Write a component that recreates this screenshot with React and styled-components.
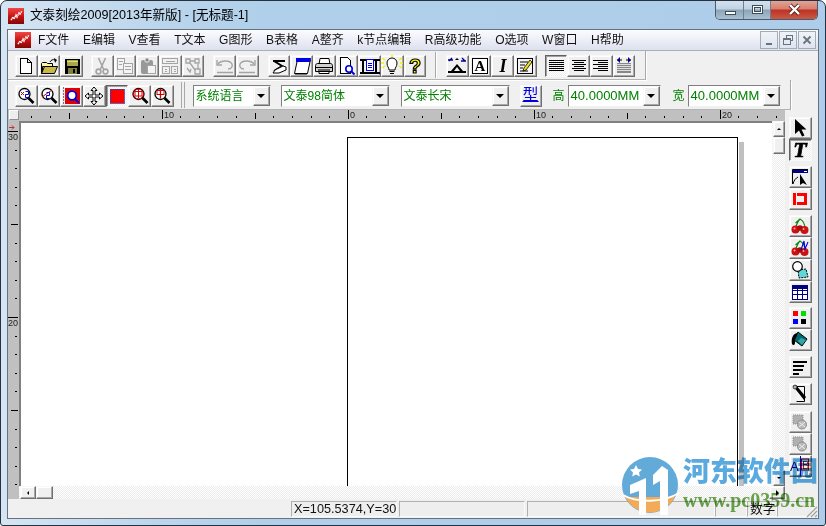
import React from 'react';
import styled, { createGlobalStyle, css } from 'styled-components';

const Global = createGlobalStyle`
  html, body { margin: 0; padding: 0; background: #fff; }
  * { box-sizing: border-box; }
`;
const UI = `"Liberation Sans", "Noto Sans CJK SC", sans-serif`;
const dither = `conic-gradient(#ffffff 25%, #ececec 0 50%, #ffffff 0 75%, #ececec 0) 0 0 / 2px 2px`;
const raised = css`
  background: #f0f0f0;
  border: 1px solid;
  border-color: #f8f8f8 #707070 #707070 #f8f8f8;
  box-shadow: inset -1px -1px 0 #a8a8a8, inset 1px 1px 0 #fff;
`;

const Frame = styled.div`
  position: relative; width: 826px; height: 526px; overflow: hidden;
  display: flex; flex-direction: column; font-family: ${UI};
  background: linear-gradient(90deg, #d6e5f3 0, #bcd6ec 150px, #afcfea 270px, #aecdea 100%);
  border: 1px solid #27323e; border-radius: 7px 7px 3px 3px;
  padding: 0 6px 6px;
`;
const TitleBar = styled.div`
  height: 28px; flex: none; display: flex; align-items: flex-start; gap: 6px;
  margin: 0 -6px; padding: 7px 0 0 7px; position: relative;
`;
const TitleText = styled.div`font-size: 12.6px; line-height: 14px; color: #000; white-space: nowrap;`;
const Caption = styled.div`
  position: absolute; top: -1px; right: 7px; height: 20px; display: flex;
  border: 1px solid #4a5a6a; border-top: 0; border-radius: 0 0 5px 5px; overflow: hidden;
`;
const CapBtn = styled.div`
  width: ${p => p.$w}px; display: flex; align-items: center; justify-content: center;
  border-left: 1px solid ${p => p.$first ? 'transparent' : '#6d7f90'};
  background: ${p => p.$close
    ? 'linear-gradient(180deg, #e2a99c 0%, #d88070 45%, #bf3325 55%, #c85a46 100%)'
    : 'linear-gradient(180deg, #d5e3ef 0%, #c2d4e4 45%, #8fa5b9 55%, #a9c0d2 100%)'};
`;
const CapMin = styled.i`display: block; width: 11px; height: 4px; margin-top: 6px; background: #fff; border: 1px solid #3d4c5a;`;
const CapMax = styled.i`display: block; width: 11px; height: 9px; background: transparent; border: 1px solid #3d4c5a; box-shadow: inset 0 0 0 1px #fff, inset 0 0 0 2px #3d4c5a;`;
const CapClose = styled.svg`width: 15px; height: 13px;`;

const Inner = styled.div`
  flex: 1; min-height: 0; display: flex; flex-direction: column;
  background: #f0f0f0; border: 1px solid #66727e;
`;
const MenuBar = styled.div`
  height: 21px; flex: none; display: flex; align-items: center; padding: 0 2px 1px 7px;
  background: linear-gradient(180deg, #fbfcfe 0%, #eef0f8 45%, #dde1ee 100%);
  border-bottom: 1px solid #a9b0bd; position: relative;
`;
const MenuIconSlot = styled.div`flex: none; display: flex; margin-right: 7px;`;
const MenuItems = styled.div`display: flex; gap: 13.6px; flex: 1;`;
const MenuItem = styled.span`font-size: 12px; line-height: 16px; color: #111; white-space: nowrap;`;
const MdiBtns = styled.div`display: flex; gap: 1px; margin-top: 1px;`;
const MdiBtn = styled.div`
  width: 18px; height: 18px; display: flex; align-items: center; justify-content: center;
  background: linear-gradient(180deg, #f0f3f8, #dfe4ee); border: 1px solid #a3adb8;
`;
const MdiGlyph = styled.svg`width: 12px; height: 12px; display: block;`;
const ToolRow = styled.div`
  height: ${p => p.$h}px; flex: none; display: flex; align-items: flex-start; padding: ${p => p.$pt}px 0 0 7px;
  width: ${p => p.$w}px; border-right: 1px solid #a8a8a8; border-bottom: 1px solid #b4b4b4;
  box-shadow: 1px 1px 0 #fff;
`;
const ToolGroup = styled.div`display: flex; flex: none; margin-left: ${p => p.$ml || 0}px;`;
const ToolBtn = styled.div`
  width: 22.67px; height: 22px; flex: none; display: flex; align-items: center; justify-content: center;
  ${raised}
  ${p => p.$on && css`
    background: ${dither};
    border-color: #606060 #f8f8f8 #f8f8f8 #606060;
    box-shadow: inset 1px 1px 0 #a0a0a0;
  `}
`;
const Groove = styled.div`
  flex: none; width: ${p => p.$double ? 4 : 2}px; height: 26px; margin: -3px ${p => p.$mr}px 0 ${p => p.$ml}px;
  border-left: 1px solid #a8a8a8; border-right: 1px solid ${p => p.$double ? '#a8a8a8' : '#fff'};
`;
const Combo = styled.div`
  width: ${p => p.$w}px; height: 22px; flex: none; display: flex; margin-left: ${p => p.$ml || 0}px;
  background: #fff; border: 1px solid; border-color: #808080 #f0f0f0 #f0f0f0 #808080;
`;
const ComboText = styled.div`
  flex: 1; padding-left: ${p => p.$pl || 2}px; white-space: nowrap; overflow: hidden;
  font-size: ${p => p.$fs || 12}px; line-height: 20px; color: #008000;
`;
const ComboArrow = styled.div`
  width: 17px; flex: none; display: flex; align-items: center; justify-content: center;
  ${raised}
  &::before { content: ''; border: 4px solid transparent; border-top: 4px solid #000; border-bottom: 0; }
`;
const TypeLink = styled.div`
  width: 22px; height: 22px; flex: none; margin-left: 10px; text-align: center; ${raised};
  font-size: 16px; line-height: 18px; color: #0000e0; text-decoration: underline;
`;
const FieldLabel = styled.span`
  flex: none; width: ${p => p.$w}px; margin-left: ${p => p.$ml}px; font-size: 12px; line-height: 22px; color: #008000;
`;

const Work = styled.div`flex: 1; min-height: 0; display: flex;`;
const LeftCol = styled.div`flex: 1; min-width: 0; display: flex; flex-direction: column; background: #c0c0c0;`;
const RulerTop = styled.div`height: 11px; flex: none; display: flex; padding-left: 1px;`;
const Corner = styled.div`width: 10px; height: 10px; flex: none; background: #ededed; border: 1px solid; border-color: #fff #909090 #909090 #fff;`;
const RulerSvg = styled.svg`display: block; flex: none; font-family: "Liberation Sans", sans-serif;`;
const Body = styled.div`flex: 1; min-height: 0; display: flex;`;
const CanvasCol = styled.div`flex: 1; min-width: 0; display: flex; flex-direction: column;`;
const CanvasRow = styled.div`flex: 1; min-height: 0; display: flex;`;
const Canvas = styled.div`
  flex: 1; min-width: 0; overflow: hidden; background: #fff;
  border-left: 2px solid #808080; border-top: 2px solid #808080; padding: 14px 0 0 326px;
`;
const Page = styled.div`
  width: 391px; height: 500px; background: #fff; border: 1px solid #000;
  box-shadow: 1px 5px 0 #fff, 6px 5px 0 #c0c0c0;
`;
const VScroll = styled.div`
  width: 13px; flex: none; display: flex; flex-direction: column; background: ${dither}; padding-left: 1px;
`;
const HScroll = styled.div`
  height: 13px; flex: none; display: flex; background: ${dither}; padding-left: 1px;
`;
const ScrollBtn = styled.div`
  flex: none; width: ${p => p.$w}px; height: ${p => p.$h}px; display: flex; align-items: center; justify-content: center; ${raised};
  &::before { content: ''; ${p => p.$arrow === 'up' && 'border: 2px solid transparent; border-bottom: 2px solid #000; border-top: 0;'}
    ${p => p.$arrow === 'down' && 'border: 2px solid transparent; border-top: 2px solid #000; border-bottom: 0;'}
    ${p => p.$arrow === 'left' && 'border: 2px solid transparent; border-right: 2px solid #000; border-left: 0;'}
    ${p => p.$arrow === 'right' && 'border: 3px solid transparent; border-left: 3px solid #000; border-right: 0;'} }
`;
const Spacer = styled.div`flex: 1;`;
const SideBar = styled.div`
  width: 33px; flex: none; display: flex; flex-direction: column; padding: 7px 0 0 4px; background: #f0f0f0;
`;
const SideGroup = styled.div`display: flex; flex-direction: column; margin-top: ${p => p.$mt || 0}px;`;
const StatusBar = styled.div`
  height: 19px; flex: none; display: flex; padding: 2px 0 1px 283px; gap: 2px; position: relative; background: #f0f0f0;
`;
const Pane = styled.div`
  width: ${p => p.$w}px; flex: none; font-size: 12.7px; line-height: 15px; color: #111; white-space: nowrap; padding-left: 2px;
  border: 1px solid; border-color: #b0b0b0 #fafafa #fafafa #b0b0b0; margin-left: ${p => p.$ml || 0}px; background: #eee;
`;
const Grip = styled.svg`position: absolute; right: 0; bottom: 0; width: 14px; height: 14px;`;
const Watermark = styled.div`
  position: absolute; left: 621px; top: 452px; width: 200px; height: 62px; display: flex; pointer-events: none;
`;
const WmLogo = styled.svg`width: 58px; height: 60px; flex: none; margin-top: 2px; opacity: .95;`;
const WmText = styled.div`display: flex; flex-direction: column; margin-left: 3px;`;
const WmName = styled.div`font: 900 27px/34px "Noto Sans CJK SC", sans-serif; color: #5aaae0; white-space: nowrap; mix-blend-mode: multiply;`;
const WmUrl = styled.div`font: bold 20px/22px "Liberation Serif", serif; color: #6aa84a; white-space: nowrap; margin-top: 2px; mix-blend-mode: multiply;`;
const AppGlyph = styled.svg`width: 16px; height: 16px; flex: none; display: block;`;

/* ---------- icons ---------- */
const I = styled.svg`width: 20px; height: 20px; display: block; flex: none; overflow: visible;`;
const G = '#a4a4a4';
const Lines = ({ rows, color = '#000' }) => rows.map(([x, y, w], i) => <rect key={i} x={x} y={y} width={w} height="1" fill={color} />);
const Mag = ({ children }) => (<>
  <circle cx="8.5" cy="8" r="5.5" fill="#fff" stroke="#000" strokeWidth="1.3" />
  {children}
  <path d="M12.5 12l5 5" stroke="#000" strokeWidth="2.6" />
</>);
const Cherries = () => (<>
  <path d="M5.5 12C7 7 9 4 10 3c2 1 5 4 5 10M5.500 7l4.500-4" fill="none" stroke="#108a10" strokeWidth="1.2" />
  <circle cx="5.500" cy="13.500" r="4" fill="#cc1111" /><circle cx="14.500" cy="14" r="4" fill="#cc1111" /><circle cx="10" cy="12" r="2.800" fill="#aa0a0a" />
  <circle cx="4.500" cy="12.500" r="1" fill="#ffaaaa" /><circle cx="13.500" cy="13" r="1" fill="#ffaaaa" />
</>);
const icons = {
  new: <path d="M4.5 2.5h7l4 4v11h-11zM11.5 2.5v4h4" fill="#fff" stroke="#000" shapeRendering="crispEdges" />,
  open: <>
    <path d="M2.5 7.5l1-1h4l1 1h5v3h-10v7h-1z" fill="#fff8a0" stroke="#000" />
    <path d="M2.5 17.5l3-7h13l-3 7z" fill="#c8b848" stroke="#000" />
    <path d="M11 6c1-2 3-3 5-2" fill="none" stroke="#000" /><path d="M15 2l3 2-2 3z" fill="#000" />
  </>,
  save: <g shapeRendering="crispEdges">
    <rect x="3" y="3" width="15" height="15" fill="#000" /><rect x="5" y="4" width="11" height="6" fill="#a8a848" />
    <rect x="5" y="5" width="11" height="1" fill="#e0e070" /><rect x="6" y="12" width="9" height="6" fill="#808040" /><rect x="11" y="13" width="2" height="4" fill="#000" />
  </g>,
  cut: <g fill="none" stroke={G} strokeWidth="1.6">
    <path d="M6.5 2l5 11M13.5 2l-5 11" /><circle cx="6.5" cy="15.5" r="2.4" /><circle cx="13.5" cy="15.5" r="2.4" />
  </g>,
  copy: <g fill="#f4f4f4" stroke={G} shapeRendering="crispEdges">
    <path d="M2.5 2.5h7v11h-7z" /><path d="M8.5 7.5h9v10h-9z" /><path d="M4 5.5h4M4 8.5h3M10 10.5h6M10 13.5h6" fill="none" />
  </g>,
  paste: <g>
    <rect x="3" y="4" width="12" height="14" rx="2" fill="#989898" /><rect x="7" y="2" width="4" height="4" rx="1" fill="#888" stroke="#eee" />
    <path d="M9.5 9.5h8v8h-8z" fill="#f4f4f4" stroke={G} shapeRendering="crispEdges" />
  </g>,
  fmt: <g fill="#f0f0f0" stroke={G} shapeRendering="crispEdges">
    <path d="M2.5 2.5h15v5h-15zM2.5 10.5h7v7h-7zM11.5 10.5h6v7h-6zM5.5 5h9M5 13h2M5 15h2M13.5 13h2M13.5 15h2" />
  </g>,
  nodes: <g fill="none" stroke={G} strokeWidth="1.3">
    <path d="M3 3h4v4H3zM12 3h4v4h-4zM12 13h5v5h-5zM7 5l5 0M7 7l5 7M15 8v5" /><path d="M4 12l3 4 1-3" />
  </g>,
  undo: <g fill="none" stroke={G} strokeWidth="1.4">
    <path d="M3 8c3-4 12-4 14 0 1 3-1 5-4 5" /><path d="M2 4v5h5" /><path d="M2 16.5h16" strokeWidth="1.4" />
  </g>,
  redo: <g fill="none" stroke={G} strokeWidth="1.4">
    <path d="M17 8c-3-4-12-4-14 0-1 3 1 5 4 5" /><path d="M18 4v5h-5" /><path d="M2 16.5h16" />
  </g>,
  sigma: <>
    <path d="M4 5h12M5 5l8 5-8 5" fill="none" stroke="#000" strokeWidth="2" />
    <path d="M6 14l8-4 3 1v3l-7 3H4z" fill="#fff" stroke="#000" strokeWidth="1" />
  </>,
  pageSkew: <>
    <path d="M5.5 3.5h13l-3 14h-13z" fill="#fff" stroke="#000" /><path d="M4 2h15l-1 4H4z" fill="#0000e0" />
    <path d="M3 18h12" stroke="#000" />
  </>,
  printer: <>
    <path d="M6 2.5h9l1 6H5z" fill="#fff" stroke="#000" /><path d="M1.5 9.5c0-1 1-2 2-2h13c1 0 2 1 2 2v6h-17z" fill="#d0d0d0" stroke="#000" />
    <path d="M2 11.5h16M4 14h12" stroke="#000" /><path d="M5 15.5h10v2H5z" fill="#fff" stroke="#000" />
  </>,
  preview: <>
    <path d="M3.5 1.5h7l3 3v13h-10z" fill="#fff" stroke="#000" shapeRendering="crispEdges" />
    <circle cx="12" cy="13" r="3.2" fill="#fff" stroke="#0000e0" strokeWidth="1.6" /><path d="M14.5 15.5l3 3" stroke="#0000e0" strokeWidth="2" />
  </>,
  poster: <g shapeRendering="crispEdges">
    <rect x="0" y="3" width="20" height="2" fill="#000" /><rect x="2" y="3" width="2" height="15" fill="#000" /><rect x="15" y="3" width="2" height="15" fill="#000" />
    <rect x="0" y="16" width="20" height="2" fill="#000" />
    <path d="M6.5 3.5h7v11h-7z" fill="#fff" stroke="#0000e0" /><path d="M8 7h4M8 9h4M8 11h4" stroke="#0000e0" fill="none" />
  </g>,
  bulb: <>
    <path d="M7 14c0-3-2-3-2-7a5 5 0 0 1 10 0c0 4-2 4-2 7z" fill="#fff" stroke="#000" /><path d="M7.5 15.5h5M8 17.5h4" stroke="#000" />
    <path d="M0 2l3 2M-1 7h3M0 12l3-2M20 2l-3 2M21 7h-3M20 12l-3-2M10 -1v2" stroke="#f4f000" strokeWidth="1.500" />
  </>,
  help: <text x="10" y="17" textAnchor="middle" fontFamily="Liberation Sans" fontWeight="bold" fontSize="20" fill="#ffff00" stroke="#000" strokeWidth="1.2">?</text>,
  arc: <>
    <path d="M1 17h18v-2h-3L10 8 4 15H1z" fill="#000" /><path d="M10 11l-3 4h6z" fill="#f0f0f0" />
    <path d="M1 4h5M2 5l3-3M14 5h5M15 2l3 3" stroke="#000090" strokeWidth="1.3" fill="none" /><path d="M8 4l2-2 2 2z" fill="#000" />
  </>,
  boxA: <>
    <rect x="2.5" y="2.5" width="15" height="15" fill="#fff" stroke="#000" strokeWidth="1.4" shapeRendering="crispEdges" />
    <text x="10" y="15" textAnchor="middle" fontFamily="Liberation Serif" fontWeight="bold" fontSize="15" fill="#000">A</text>
  </>,
  italic: <text x="10" y="16" textAnchor="middle" fontFamily="Liberation Serif" fontStyle="italic" fontWeight="bold" fontSize="18" fill="#000">I</text>,
  memo: <>
    <rect x="2.5" y="2.5" width="15" height="15" fill="#f4f4f4" stroke="#000" strokeWidth="1.3" shapeRendering="crispEdges" />
    <path d="M5 6h8M5 9h5M5 12h3M5 15h8" stroke="#000" /><path d="M15 4l2 2-6 8-3 1 1-3z" fill="#f0e020" stroke="#000" strokeWidth=".8" />
  </>,
  alignL: <g shapeRendering="crispEdges"><Lines rows={[[3, 4, 15], [3, 6, 15], [3, 8, 15], [3, 10, 15], [3, 12, 15], [3, 14, 15]]} /></g>,
  alignC: <g shapeRendering="crispEdges"><Lines rows={[[3, 4, 14], [5, 6, 10], [3, 8, 14], [5, 10, 10], [3, 12, 14], [5, 14, 10]]} /></g>,
  alignR: <g shapeRendering="crispEdges"><Lines rows={[[2, 4, 15], [7, 6, 10], [2, 8, 15], [7, 10, 10], [2, 12, 15], [7, 14, 10]]} /></g>,
  justify: <>
    <rect x="3" y="7" width="14" height="10" fill="#888" /><g shapeRendering="crispEdges"><Lines rows={[[3, 8, 14], [3, 10, 14], [3, 12, 14], [3, 14, 14]]} color="#ddd" /></g>
    <path d="M3 4h5M12 4h5" stroke="#000" /><path d="M6 1l-3 3 3 3zM14 1l3 3-3 3z" fill="#000090" />
  </>,
  zoomX: <Mag><path d="M5 6l3 3M8 6l-3 3" stroke="#d00000" /><path d="M9.5 5.5h3v3h-3v3h3" fill="none" stroke="#0000e0" /></Mag>,
  zoom2: <Mag><path d="M3 11L13 4" stroke="#d00000" /><path d="M7.5 6.5h3v3h-3v3h3" fill="none" stroke="#0000e0" /></Mag>,
  zoomFrame: <>
    <rect x="3" y="2" width="15" height="16" fill="#e00000" /><path d="M1 2h1M1 5h1M1 8h1M1 11h1M1 14h1M1 17h1" stroke="#000" />
    <circle cx="10" cy="9.5" r="4.3" fill="#fff" stroke="#0000e0" strokeWidth="1.8" /><path d="M13 13l4 4" stroke="#0000e0" strokeWidth="2.2" />
  </>,
  move: <path d="M10 1l3 3.5h-2V9h4.500V7L19 10l-3.500 3v-2H11v4.500h2L10 19l-3-3.500h2V11H4.500v2L1 10l3.500-3v2H9V4.500H7z" fill="#fff" stroke="#000" strokeWidth="1" />,
  redBox: <rect x="3" y="3" width="14" height="14" fill="#ff0000" stroke="#4040a0" strokeWidth=".8" shapeRendering="crispEdges" />,
  zoomC: <Mag><rect x="5" y="5.500" width="7" height="4.500" fill="none" stroke="#d00000" /><path d="M8.500 3v9" stroke="#d00000" /><circle cx="8.500" cy="8" r="5" fill="none" stroke="#d00000" /></Mag>,
  zoomD: <Mag><rect x="5" y="4.500" width="7" height="4" fill="none" stroke="#d00000" /><path d="M8.500 2.500v10" stroke="#d00000" strokeWidth="1.300" /></Mag>,
  cursor: <path d="M5 1v15l4-3.500 3 6 2.500-1-3-6h5z" fill="#000" />,
  textT: <text x="10" y="17" textAnchor="middle" fontFamily="Liberation Serif" fontStyle="italic" fontWeight="bold" fontSize="22" fill="#000" stroke="#000" strokeWidth=".7">T</text>,
  winCur: <>
    <path d="M2.500 17V2.500H18" fill="none" stroke="#000" /><rect x="3" y="3" width="15" height="3" fill="#000090" /><rect x="14" y="4" width="3" height="1" fill="#fff" />
    <path d="M10 7v11l3-2 4 2z" fill="#000" /><path d="M3 17c1-4 3-6 5-7" fill="none" stroke="#000" />
  </>,
  redFrame: <g fill="#ff0000" shapeRendering="crispEdges">
    <rect x="3" y="4" width="3" height="12" /><rect x="7" y="4" width="10" height="3" /><rect x="14" y="4" width="3" height="12" /><rect x="7" y="13" width="10" height="3" />
  </g>,
  cherry: <Cherries />,
  cherryB: <><Cherries /><path d="M11 12l3-9 1 8 3-7" fill="none" stroke="#0000e0" strokeWidth="1.100" /></>,
  shapes: <>
    <path d="M8 10l8-1 2 8-9 1z" fill="#60d8d8" stroke="#000" strokeDasharray="2 1" /><circle cx="7.500" cy="6.500" r="4.800" fill="#fff" stroke="#000" strokeWidth="1.200" />
  </>,
  table: <g shapeRendering="crispEdges">
    <rect x="2" y="3" width="16" height="15" fill="#fff" /><rect x="2" y="3" width="16" height="4" fill="#000080" />
    <path d="M2.500 3v15M17.500 3v15M2 17.500h16M2 12h16M7.500 7v11M12.500 7v11M2 8.500h16" stroke="#000080" fill="none" />
  </g>,
  colors: <g shapeRendering="crispEdges">
    <rect x="3" y="3" width="5" height="5" fill="#ff0000" /><rect x="11" y="3" width="5" height="5" fill="#00e000" />
    <rect x="3" y="11" width="5" height="5" fill="#0000ff" /><rect x="11" y="11" width="5" height="5" fill="#000" />
  </g>,
  bucket: <>
    <path d="M8 2l9 7-5 7-8-6z" fill="#006870" stroke="#000" /><path d="M11 8l5 2-4 5-4-4z" fill="#30a8a8" />
    <path d="M7 3C3 4 1 8 2 14c1 2 3 1 3-1 0-3 0-5 2-7" fill="#000" />
  </>,
  para: <g shapeRendering="crispEdges"><Lines rows={[[3, 4, 14], [3, 5, 14], [3, 8, 11], [3, 9, 11], [3, 12, 10], [3, 13, 10], [3, 16, 6], [3, 17, 6]]} /></g>,
  door: <>
    <path d="M6.500 2.500h8v15h-8" fill="#f4f4f4" stroke="#000" /><path d="M3 2l3-1 10 12-2 3z" fill="#000" /><circle cx="5" cy="3" r="2" fill="#aaa" stroke="#000" strokeWidth=".6" />
  </>,
  gray1: <g>
    <path d="M3 3h10v9H3z" fill="#b0b0b0" stroke="#909090" strokeDasharray="1 1" /><circle cx="12" cy="12.500" r="4.500" fill="#b8b8b8" stroke="#8c8c8c" /><path d="M9 10l6 5M15 10l-6 5" stroke="#eee" />
  </g>,
  ab: <>
    <text x="0" y="15" fontFamily="Liberation Sans" fontSize="13" fill="#000080">A</text>
    <path d="M10.500 0v20" stroke="#0000e0" /><rect x="11.500" y="3" width="7" height="11" fill="none" stroke="#ff0000" />
    <text x="12" y="13" fontFamily="Liberation Sans" fontSize="11" fill="#e00000">B</text>
  </>,
};
const Tool = ({ name, on }) => <ToolBtn $on={on}><I viewBox="0 0 20 20">{icons[name]}</I></ToolBtn>;

const Logo = ({ id }) => (
  <AppGlyph viewBox="0 0 16 16">
    <defs>
      <linearGradient id={id} x1="0" y1="0" x2="0" y2="1">
        <stop offset="0" stopColor="#f04848" /><stop offset=".55" stopColor="#c81010" /><stop offset="1" stopColor="#800808" />
      </linearGradient>
    </defs>
    <rect x="0" y="0" width="16" height="16" fill={`url(#${id})`} />
    <path d="M3 12l2-3 1 2 2-4 1 2 2-4 1 1 2-3" fill="none" stroke="#fff" strokeWidth="1.500" strokeDasharray="1.500 .5" />
  </AppGlyph>
);

const HRuler = () => {
  const t = [];
  for (let i = -17; i <= 23; i++) {
    const x = Math.round(347.7 + i * 18.6 - 19);
    const lab = i % 10 === 0, big = i % 5 === 0;
    t.push(<rect key={i} x={x} y={lab ? 0 : big ? 3 : 6} width="1" height={lab ? 9 : big ? 6 : 2} fill="#000" />);
    if (lab) t.push(<text key={'l' + i} x={x + 2} y="8" fontSize="9" fill="#222">{Math.abs(i)}</text>);
  }
  return <RulerSvg width="766" height="11">{t}</RulerSvg>;
};
const VRuler = () => {
  const t = [];
  for (let i = 0; i <= 20; i++) {
    const y = Math.round(131 + i * 18.6 - 121);
    const lab = i % 10 === 0, big = i % 5 === 0;
    t.push(<rect key={i} x={lab ? 0 : big ? 3 : 7} y={y} width={lab ? 10 : big ? 7 : 2} height="1" fill="#000" />);
    if (lab && i < 20) t.push(<text key={'l' + i} x="0" y={y + 9} fontSize="9" fill="#222">{30 - i}</text>);
  }
  t.push(<path key="m" d="M1 6.500h5M4 4.500l2 2-2 2" stroke="#c03040" fill="none" />);
  return <RulerSvg width="11" height="378">{t}</RulerSvg>;
};

export default function App() {
  return (
    <>
      <Global />
      <Frame>
        <TitleBar>
          <Logo id="logoA" />
          <TitleText>文泰刻绘2009[2013年新版] - [无标题-1]</TitleText>
          <Caption>
            <CapBtn $w={27} $first><CapMin /></CapBtn>
            <CapBtn $w={27}><CapMax /></CapBtn>
            <CapBtn $w={47} $close>
              <CapClose viewBox="0 0 15 13">
                <path d="M3 2l9 9M12 2l-9 9" stroke="#5a2018" strokeWidth="4" />
                <path d="M3 2l9 9M12 2l-9 9" stroke="#fff" strokeWidth="2.400" />
              </CapClose>
            </CapBtn>
          </Caption>
        </TitleBar>
        <Inner>
          <MenuBar>
            <MenuIconSlot><Logo id="logoB" /></MenuIconSlot>
            <MenuItems>
              {['F文件', 'E编辑', 'V查看', 'T文本', 'G图形', 'B表格', 'A整齐', 'k节点编辑', 'R高级功能', 'O选项', 'W窗口', 'H帮助'].map(m => <MenuItem key={m}>{m}</MenuItem>)}
            </MenuItems>
            <MdiBtns>
              <MdiBtn><MdiGlyph viewBox="0 0 12 12"><rect x="3" y="9" width="6" height="2" fill="#69737f" /></MdiGlyph></MdiBtn>
              <MdiBtn><MdiGlyph viewBox="0 0 12 12"><path d="M4.500 3.500V1.500h6v5h-2M1.500 4.500h7v6h-7z M1.500 5.500h7" fill="none" stroke="#69737f" shapeRendering="crispEdges" /></MdiGlyph></MdiBtn>
              <MdiBtn><MdiGlyph viewBox="0 0 12 12"><path d="M2.500 2.500l7 7M9.500 2.500l-7 7" stroke="#69737f" strokeWidth="1.800" /></MdiGlyph></MdiBtn>
            </MdiBtns>
          </MenuBar>
          <ToolRow $w={638} $h={29} $pt={4}>
            <ToolGroup>{['new', 'open', 'save'].map(n => <Tool key={n} name={n} />)}</ToolGroup>
            <ToolGroup $ml={8}>{['cut', 'copy', 'paste', 'fmt', 'nodes'].map(n => <Tool key={n} name={n} />)}</ToolGroup>
            <ToolGroup $ml={9}>{['undo', 'redo'].map(n => <Tool key={n} name={n} />)}</ToolGroup>
            <ToolGroup $ml={9}>{['sigma', 'pageSkew', 'printer', 'preview', 'poster', 'bulb', 'help'].map(n => <Tool key={n} name={n} />)}</ToolGroup>
            <Groove $ml={9} $mr={9} />
            <ToolGroup>{['arc', 'boxA', 'italic', 'memo'].map(n => <Tool key={n} name={n} />)}</ToolGroup>
            <ToolGroup $ml={8}>
              <Tool name="alignL" on /><Tool name="alignC" /><Tool name="alignR" /><Tool name="justify" />
            </ToolGroup>
          </ToolRow>
          <ToolRow $w={783} $h={30} $pt={5}>
            <ToolGroup>
              {['zoomX', 'zoom2', 'zoomFrame', 'move'].map(n => <Tool key={n} name={n} />)}
              <Tool name="redBox" on />
              {['zoomC', 'zoomD'].map(n => <Tool key={n} name={n} />)}
            </ToolGroup>
            <Groove $double $ml={7} $mr={8} />
            <Combo $w={78}><ComboText>系统语言</ComboText><ComboArrow /></Combo>
            <Combo $w={109} $ml={10}><ComboText>文泰98简体</ComboText><ComboArrow /></Combo>
            <Combo $w={109} $ml={11}><ComboText>文泰长宋</ComboText><ComboArrow /></Combo>
            <TypeLink>型</TypeLink>
            <FieldLabel $ml={11} $w={15}>高</FieldLabel>
            <Combo $w={93}><ComboText $fs={13} $pl={2}>40.0000MM</ComboText><ComboArrow /></Combo>
            <FieldLabel $ml={12} $w={15}>宽</FieldLabel>
            <Combo $w={93}><ComboText $fs={13} $pl={2}>40.0000MM</ComboText><ComboArrow /></Combo>
          </ToolRow>
          <Work>
            <LeftCol>
              <RulerTop><Corner /><HRuler /></RulerTop>
              <Body>
                <VRuler />
                <CanvasCol>
                  <CanvasRow>
                    <Canvas><Page /></Canvas>
                    <VScroll>
                      <ScrollBtn $w={12} $h={16} $arrow="up" />
                      <ScrollBtn $w={12} $h={17} />
                      <Spacer />
                      <ScrollBtn $w={12} $h={16} $arrow="down" />
                    </VScroll>
                  </CanvasRow>
                  <HScroll>
                    <ScrollBtn $w={16} $h={13} $arrow="left" />
                    <ScrollBtn $w={17} $h={13} />
                    <Spacer />
                    <ScrollBtn $w={16} $h={13} $arrow="right" />
                  </HScroll>
                </CanvasCol>
              </Body>
            </LeftCol>
            <SideBar>
              <SideGroup><Tool name="cursor" /><Tool name="textT" on /></SideGroup>
              <SideGroup $mt={5}><Tool name="winCur" /><Tool name="redFrame" /></SideGroup>
              <SideGroup $mt={5}>{['cherry', 'cherryB', 'shapes', 'table'].map(n => <Tool key={n} name={n} />)}</SideGroup>
              <SideGroup $mt={4}><Tool name="colors" /><Tool name="bucket" /></SideGroup>
              <SideGroup $mt={5}><Tool name="para" /></SideGroup>
              <SideGroup $mt={5}><Tool name="door" /></SideGroup>
              <SideGroup $mt={6}><Tool name="gray1" /><Tool name="gray1" /><Tool name="ab" /></SideGroup>
            </SideBar>
          </Work>
          <StatusBar>
            <Pane $w={106}>X=105.5374,Y=30</Pane>
            <Pane $w={126} />
            <Pane $w={188} />
            <Pane $w={32} $ml={-2} />
            <Pane $w={30} $ml={-2}>数字</Pane>
            <Pane $w={36} $ml={-2} />
            <Grip viewBox="0 0 14 14"><path d="M13 3L3 13M13 7l-6 6M13 11l-2 2" stroke="#a0a0a0" strokeWidth="1.200" /></Grip>
          </StatusBar>
        </Inner>
        <Watermark>
          <WmLogo viewBox="0 0 58 60">
            <circle cx="28" cy="30" r="28" fill="#5aa7d8" />
            <path d="M3 42a28 28 0 0 0 50 0z" fill="#f4a850" />
            <path d="M1 40c14 8 40 8 56 -2" fill="none" stroke="#fff" strokeWidth="2" />
            <path d="M8 30l16-7v37H17V36l-9 3z" fill="#fff" />
            <path d="M31 20l9-9 6 4v45H38V26l-7 4z" fill="#fff" />
            <path d="M14 10l2 4 4 .5-3 3 .8 4L14 19.500 10.200 21.500l.8-4-3-3 4-.5z" fill="#fff" />
          </WmLogo>
          <WmText>
            <WmName>河东软件园</WmName>
            <WmUrl>www.pc0359.cn</WmUrl>
          </WmText>
        </Watermark>
      </Frame>
    </>
  );
}
